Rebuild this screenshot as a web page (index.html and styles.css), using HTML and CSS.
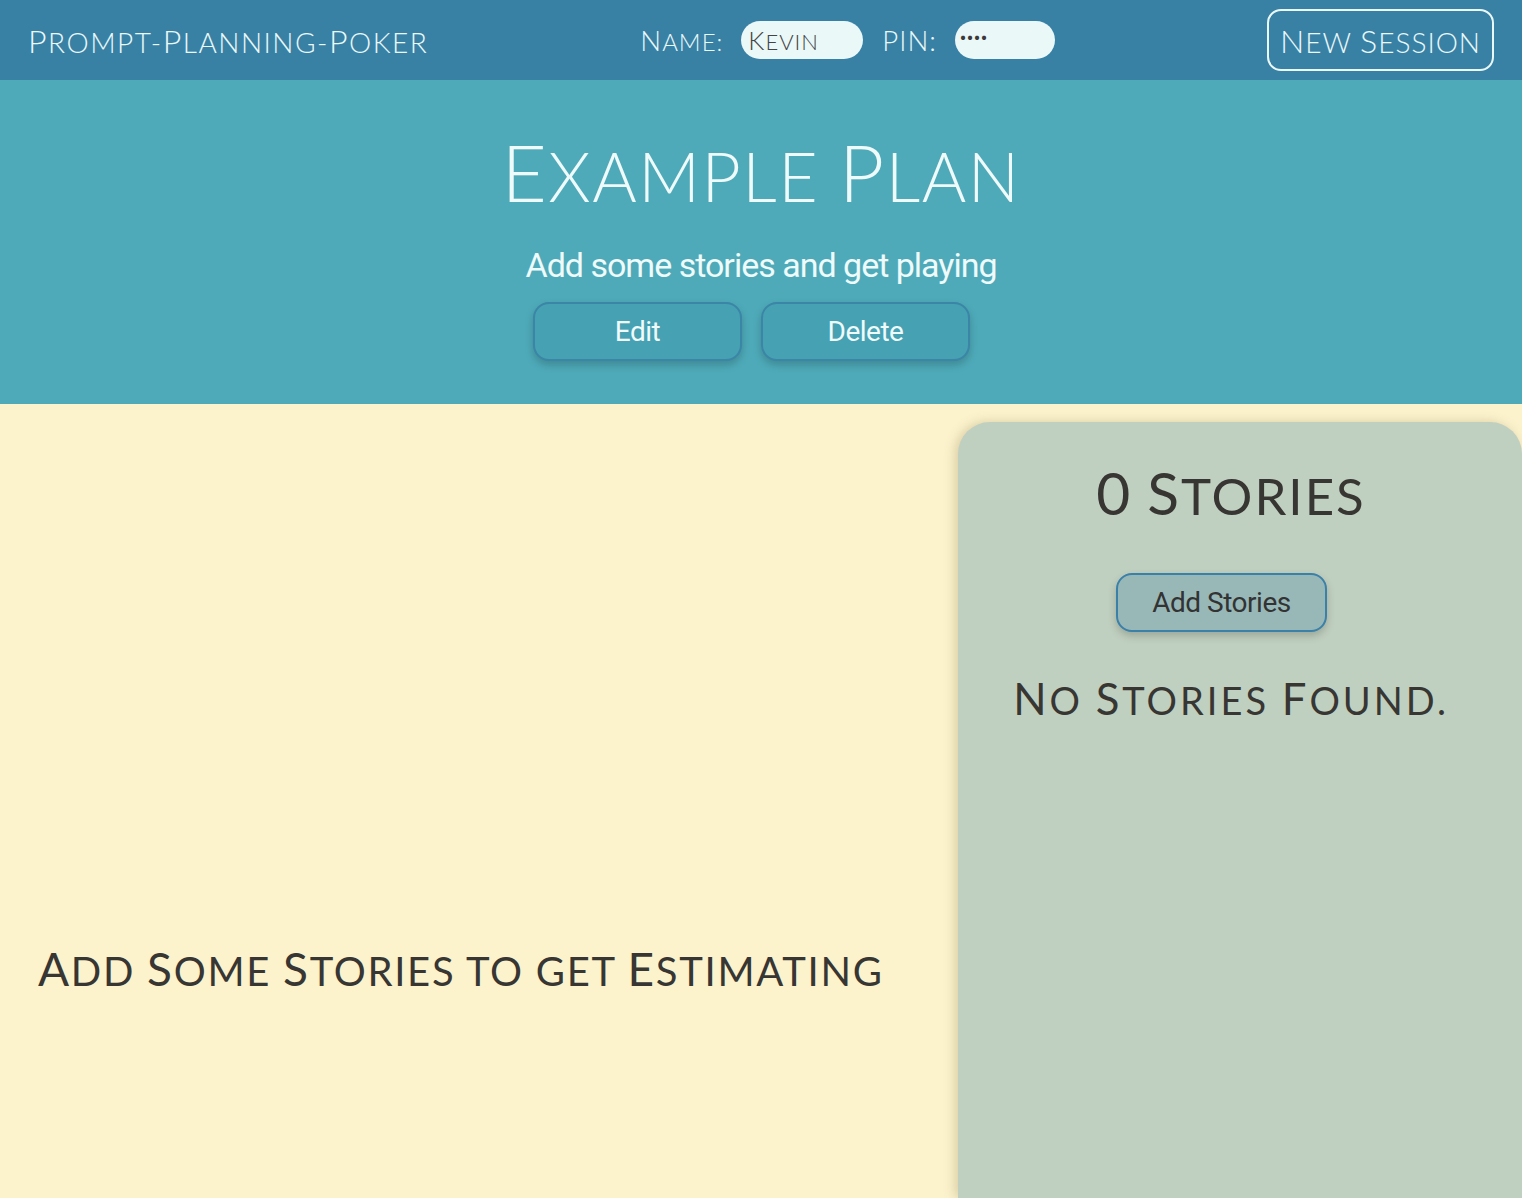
FILE: index.html
```html
<!DOCTYPE html>
<html>
<head>
<meta charset="utf-8">
<link rel="stylesheet" href="styles.css">
</head>
<body>
<header class="topbar">
  <div class="brand"><span class="cap">P</span>rompt-<span class="cap">P</span>lanning-<span class="cap">P</span>oker</div>
  <div class="user">
    <label class="lbl"><span class="cap">N</span>ame:</label>
    <div class="field name-field"><span class="cap">K</span>evin</div>
    <label class="lbl"><span class="cap">PIN:</span></label>
    <div class="field pin-field">····</div>
  </div>
  <button class="new-session"><span class="cap">N</span>ew <span class="cap">S</span>ession</button>
</header>
<section class="hero">
  <h1 class="plan-title"><span class="cap">E</span>xample <span class="cap">P</span>lan</h1>
  <p class="plan-desc">Add some stories and get playing</p>
  <div class="hero-actions">
    <button class="btn btn-hero">Edit</button>
    <button class="btn btn-hero">Delete</button>
  </div>
</section>
<main class="content">
  <div class="board">
    <h2 class="empty-msg"><span class="cap">A</span>dd <span class="cap">S</span>ome <span class="cap">S</span>tories to get <span class="cap">E</span>stimating</h2>
  </div>
  <aside class="stories">
    <h2 class="stories-count"><span class="cap">0</span> <span class="cap">S</span>tories</h2>
    <button class="btn btn-add">Add Stories</button>
    <h3 class="no-stories"><span class="cap">N</span>o <span class="cap">S</span>tories <span class="cap">F</span>ound.</h3>
  </aside>
</main>
</body>
</html>
```
FILE: styles.css
```css
html, body {
  margin: 0;
  padding: 0;
  background: #fcf3cd;
  height: 100%;
  overflow: hidden;
}
.brand, .lbl, .field, .new-session, .plan-title, .empty-msg, .stories-count, .no-stories {
  font-family: "Lato", "Open Sans", sans-serif;
  font-weight: 300;
  text-transform: uppercase;
}
.cap {
  font-size: 1.15em;
}
.topbar {
  height: 80px;
  background: #3881a5;
  display: flex;
  align-items: center;
  justify-content: space-between;
  padding: 0 28px;
  box-sizing: border-box;
  color: #eaf8f8;
}
.brand {
  font-size: 28px;
  letter-spacing: 1.5px;
}
.user {
  display: flex;
  align-items: center;
}
.lbl {
  font-size: 24px;
  margin-right: 18px;
  letter-spacing: 1px;
}
.lbl .cap {
  letter-spacing: 1px;
}
.field {
  height: 38px;
  border-radius: 19px;
  background: #eaf8f8;
  color: #444;
  font-size: 22px;
  line-height: 38px;
  padding: 0 7px;
  box-sizing: border-box;
  letter-spacing: 1px;
}
.name-field { width: 122px; margin-right: 19px; }
.pin-field {
  width: 100px;
  font-size: 22px;
  font-weight: 700;
  color: #3a3a3a;
  line-height: 32px;
  padding-left: 5px;
  letter-spacing: 1px;
}
.new-session {
  background: transparent;
  color: #eaf8f8;
  border: 2px solid #eaf8f8;
  border-radius: 14px;
  height: 62px;
  width: 227px;
  font-size: 28px;
  padding: 0;
  letter-spacing: 1px;
}
.hero {
  background: #4eaab9;
  height: 324px;
  display: flex;
  flex-direction: column;
  align-items: center;
  box-sizing: border-box;
  padding-top: 42px;
}
.plan-title {
  margin: 0;
  font-size: 68px;
  line-height: 100px;
  color: #effafa;
  letter-spacing: 1.5px;
}
.plan-desc {
  margin: 19px 0 0;
  font-family: "Roboto", sans-serif;
  font-size: 34px;
  line-height: 40px;
  letter-spacing: -1px;
  color: #effafa;
}
.hero-actions {
  display: flex;
  margin-top: 17px;
}
.btn {
  font-family: "Roboto", sans-serif;
  height: 59px;
  width: 209px;
  border-radius: 16px;
  font-size: 28px;
  letter-spacing: -0.5px;
  cursor: pointer;
  padding: 0;
  margin: 0 19px 0 0;
}
.btn-hero {
  background: #46a1b3;
  border: 2px solid #3b85a6;
  color: #effafa;
  box-shadow: 0 4px 8px rgba(0,0,0,0.2);
}
.content {
  display: flex;
  height: 794px;
}
.board {
  width: 958px;
  flex: none;
  padding: 535px 0 0 38px;
  box-sizing: border-box;
}
.empty-msg {
  margin: 0;
  font-size: 40px;
  color: #383633;
  line-height: 60px;
  font-weight: 400;
  letter-spacing: 1.7px;
}
.stories {
  flex: 1;
  margin-top: 18px;
  background: #c0d0c0;
  border-radius: 32px 32px 0 0;
  box-shadow: -3px 0 12px rgba(90,70,20,0.22);
  display: flex;
  flex-direction: column;
  align-items: center;
  padding: 35px 18px 0 0;
}
.stories-count {
  margin: 0;
  font-size: 51px;
  line-height: 70px;
  color: #383633;
  font-weight: 400;
  letter-spacing: 2px;
}
.btn-add {
  margin-top: 42px;
  background: #98b8b8;
  border: 2px solid #3b80a8;
  color: #333;
  box-shadow: 0 4px 8px rgba(0,0,0,0.2);
  width: 211px;
}
.no-stories {
  margin: 36px 0 0;
  font-size: 38px;
  line-height: 60px;
  color: #383633;
  font-weight: 400;
  letter-spacing: 3px;
}
```
